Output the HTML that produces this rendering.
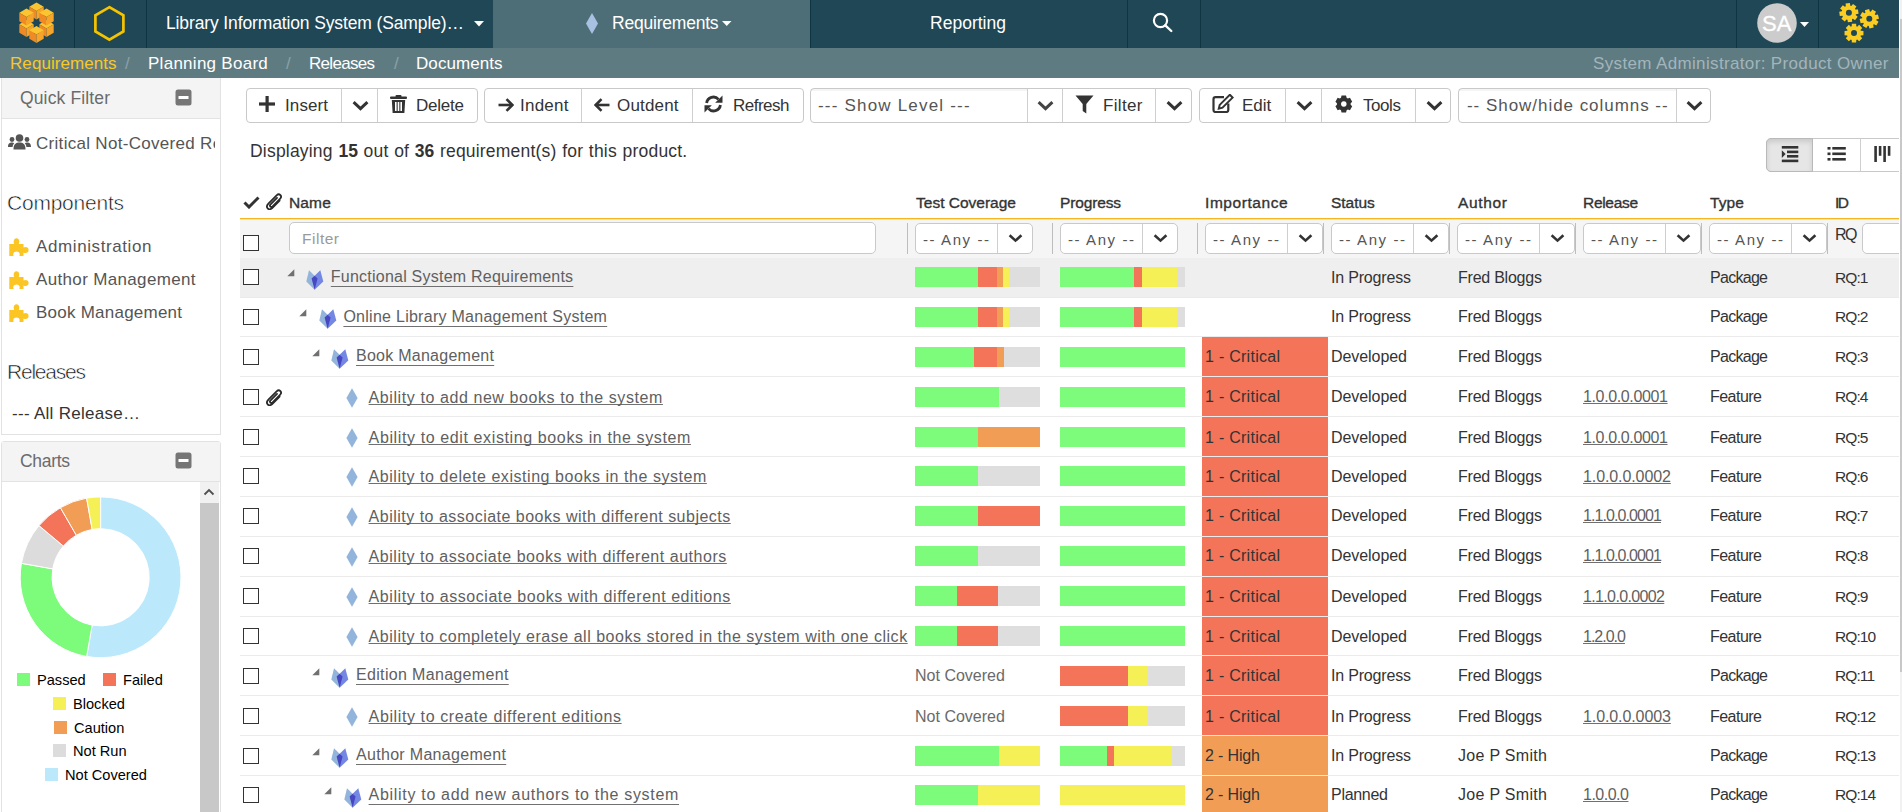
<!DOCTYPE html>
<html><head><meta charset="utf-8"><title>Requirements</title>
<style>
html,body{margin:0;padding:0;background:#fff;width:1902px;height:812px;overflow:hidden;}
body{position:relative;font-family:"Liberation Sans",sans-serif;}
.r{position:absolute;display:block;}
.t{position:absolute;white-space:nowrap;font-family:"Liberation Sans",sans-serif;}
.u{text-decoration:underline;text-underline-offset:0.6px;text-decoration-skip-ink:none;text-decoration-thickness:1px;text-decoration-color:#707070;}
.up{text-underline-offset:3.6px;}
</style></head><body>
<div class="r" style="left:0px;top:0px;width:1899px;height:48px;background:#1f4756;"></div>
<svg class="r" style="left:19px;top:2px;" width="36" height="42" viewBox="0 0 36 42"><polygon points="7.5,18.1 14.7,22.3 7.5,26.5 0.3,22.3" fill="#fbc531"/><polygon points="0.3,22.3 7.5,26.5 7.5,34.9 0.3,30.7" fill="#f08a24"/><polygon points="14.7,22.3 7.5,26.5 7.5,34.9 14.7,30.7" fill="#f6a52a"/><polygon points="27.5,18.1 34.7,22.3 27.5,26.5 20.3,22.3" fill="#fbc531"/><polygon points="20.3,22.3 27.5,26.5 27.5,34.9 20.3,30.7" fill="#f08a24"/><polygon points="34.7,22.3 27.5,26.5 27.5,34.9 34.7,30.7" fill="#f6a52a"/><polygon points="17.5,0.6 24.7,4.8 17.5,9.0 10.3,4.8" fill="#fbc531"/><polygon points="10.3,4.8 17.5,9.0 17.5,17.4 10.3,13.2" fill="#f08a24"/><polygon points="24.7,4.8 17.5,9.0 17.5,17.4 24.7,13.2" fill="#f6a52a"/><polygon points="7.5,6.6 14.7,10.8 7.5,15.0 0.3,10.8" fill="#fbc531"/><polygon points="0.3,10.8 7.5,15.0 7.5,23.4 0.3,19.2" fill="#f08a24"/><polygon points="14.7,10.8 7.5,15.0 7.5,23.4 14.7,19.2" fill="#f6a52a"/><polygon points="27.5,6.6 34.7,10.8 27.5,15.0 20.3,10.8" fill="#fbc531"/><polygon points="20.3,10.8 27.5,15.0 27.5,23.4 20.3,19.2" fill="#f08a24"/><polygon points="34.7,10.8 27.5,15.0 27.5,23.4 34.7,19.2" fill="#f6a52a"/><polygon points="17.5,24.1 24.7,28.3 17.5,32.5 10.3,28.3" fill="#fbc531"/><polygon points="10.3,28.3 17.5,32.5 17.5,40.9 10.3,36.7" fill="#f08a24"/><polygon points="24.7,28.3 17.5,32.5 17.5,40.9 24.7,36.7" fill="#f6a52a"/></svg>
<div class="r" style="left:74px;top:0px;width:1px;height:48px;background:#0f3542;"></div>
<svg class="r" style="left:90px;top:4px;" width="40" height="40" viewBox="0 0 40 40"><polygon points="19.4,3.2 33.4,11.3 33.4,27.5 19.4,35.6 5.4,27.5 5.4,11.3" fill="none" stroke="#f5c400" stroke-width="2.7"/></svg>
<div class="r" style="left:146px;top:0px;width:1px;height:48px;background:#0f3542;"></div>
<div class="t" style="left:166px;top:15px;font-size:17.5px;line-height:17.5px;color:#ffffff;letter-spacing:-0.128px;">Library Information System (Sample)…</div>
<svg class="r" style="left:474px;top:21px;" width="10" height="6" viewBox="0 0 10 6"><polygon points="0,0 10,0 5,5.5" fill="#fff"/></svg>
<div class="r" style="left:493px;top:0px;width:317px;height:48px;background:#4e6e77;"></div>
<svg class="r" style="left:585px;top:13px;" width="14" height="21" viewBox="0 0 14 21"><polygon points="7,0 13,10.5 7,21 1,10.5" fill="#a8c1e3"/></svg>
<div class="t" style="left:612px;top:15px;font-size:17.5px;line-height:17.5px;color:#ffffff;letter-spacing:-0.214px;">Requirements</div>
<svg class="r" style="left:722px;top:21px;" width="10" height="6" viewBox="0 0 10 6"><polygon points="0,0 9.5,0 4.75,5" fill="#fff"/></svg>
<div class="r" style="left:810px;top:0px;width:1px;height:48px;background:#0f3542;"></div>
<div class="t" style="left:930px;top:15px;font-size:17.5px;line-height:17.5px;color:#ffffff;letter-spacing:0.014px;">Reporting</div>
<div class="r" style="left:1127px;top:0px;width:1px;height:48px;background:#0f3542;"></div>
<svg class="r" style="left:1150px;top:10px;" width="26" height="26" viewBox="0 0 26 26"><circle cx="10.5" cy="10.5" r="6.6" fill="none" stroke="#fff" stroke-width="2.2"/><line x1="15.3" y1="15.3" x2="21.3" y2="21" stroke="#fff" stroke-width="2.4" stroke-linecap="round"/></svg>
<div class="r" style="left:1200px;top:0px;width:1px;height:48px;background:#0f3542;"></div>
<div class="r" style="left:1736px;top:0px;width:1px;height:48px;background:#0f3542;"></div>
<div class="r" style="left:1818px;top:0px;width:1px;height:48px;background:#0f3542;"></div>
<svg class="r" style="left:1757px;top:3px;" width="40" height="40" viewBox="0 0 40 40"><circle cx="20" cy="20" r="19.8" fill="#cccccc"/></svg>
<div class="t" style="left:1762px;top:13px;font-size:22px;line-height:22px;color:#ffffff;letter-spacing:0.156px;-webkit-text-stroke:0.3px #fff;">SA</div>
<svg class="r" style="left:1800px;top:22px;" width="10" height="6" viewBox="0 0 10 6"><polygon points="0,0 9,0 4.5,5" fill="#fff"/></svg>
<svg class="r" style="left:1839px;top:3px;" width="42" height="42" viewBox="0 0 42 42"><path d="M6.80,3.20 L6.58,0.58 L10.91,0.05 L11.34,2.64 L12.30,2.91 L14.00,0.91 L17.44,3.60 L15.90,5.73 L16.40,6.60 L19.02,6.38 L19.55,10.71 L16.96,11.14 L16.69,12.10 L18.69,13.80 L16.00,17.24 L13.87,15.70 L13.00,16.20 L13.22,18.82 L8.89,19.35 L8.46,16.76 L7.50,16.49 L5.80,18.49 L2.36,15.80 L3.90,13.67 L3.40,12.80 L0.78,13.02 L0.25,8.69 L2.84,8.26 L3.11,7.30 L1.11,5.60 L3.80,2.16 L5.93,3.70 Z M9.90,9.70 m-3.00,0 a3.00,3.00 0 1,0 6.00,0 a3.00,3.00 0 1,0 -6.00,0Z" fill="#fbcd22" fill-rule="evenodd"/><path d="M26.43,9.73 L25.90,7.16 L30.13,6.10 L30.86,8.62 L31.86,8.77 L33.30,6.57 L37.04,8.82 L35.77,11.12 L36.37,11.93 L38.94,11.40 L40.00,15.63 L37.48,16.36 L37.33,17.36 L39.53,18.80 L37.28,22.54 L34.98,21.27 L34.17,21.87 L34.70,24.44 L30.47,25.50 L29.74,22.98 L28.74,22.83 L27.30,25.03 L23.56,22.78 L24.83,20.48 L24.23,19.67 L21.66,20.20 L20.60,15.97 L23.12,15.24 L23.27,14.24 L21.07,12.80 L23.32,9.06 L25.62,10.33 Z M30.30,15.80 m-3.00,0 a3.00,3.00 0 1,0 6.00,0 a3.00,3.00 0 1,0 -6.00,0Z" fill="#fbcd22" fill-rule="evenodd"/><path d="M12.72,23.27 L12.82,20.65 L17.18,20.65 L17.28,23.27 L18.21,23.66 L20.14,21.87 L23.23,24.96 L21.44,26.89 L21.83,27.82 L24.45,27.92 L24.45,32.28 L21.83,32.38 L21.44,33.31 L23.23,35.24 L20.14,38.33 L18.21,36.54 L17.28,36.93 L17.18,39.55 L12.82,39.55 L12.72,36.93 L11.79,36.54 L9.86,38.33 L6.77,35.24 L8.56,33.31 L8.17,32.38 L5.55,32.28 L5.55,27.92 L8.17,27.82 L8.56,26.89 L6.77,24.96 L9.86,21.87 L11.79,23.66 Z M15.00,30.10 m-3.00,0 a3.00,3.00 0 1,0 6.00,0 a3.00,3.00 0 1,0 -6.00,0Z" fill="#fbcd22" fill-rule="evenodd"/></svg>
<div class="r" style="left:0px;top:48px;width:1899px;height:30px;background:#5f7b82;"></div>
<div class="t" style="left:10px;top:55px;font-size:17px;line-height:17px;color:#f9c825;letter-spacing:0.072px;">Requirements</div>
<div class="t" style="left:125px;top:55px;font-size:17px;line-height:17px;color:#8aa1a7;">/</div>
<div class="t" style="left:148px;top:55px;font-size:17px;line-height:17px;color:#ffffff;letter-spacing:0.273px;">Planning Board</div>
<div class="t" style="left:286px;top:55px;font-size:17px;line-height:17px;color:#8aa1a7;">/</div>
<div class="t" style="left:309px;top:55px;font-size:17px;line-height:17px;color:#ffffff;letter-spacing:-0.696px;">Releases</div>
<div class="t" style="left:394px;top:55px;font-size:17px;line-height:17px;color:#8aa1a7;">/</div>
<div class="t" style="left:416px;top:55px;font-size:17px;line-height:17px;color:#ffffff;letter-spacing:0.079px;">Documents</div>
<div class="t" style="left:1593px;top:55px;font-size:17px;line-height:17px;color:#a3b5ba;letter-spacing:0.354px;">System Administrator: Product Owner</div>
<div class="r" style="left:1px;top:78px;width:218px;height:356px;border:1px solid #e2e2e2;border-top:none;background:#fff"></div>
<div class="r" style="left:2px;top:78px;width:218px;height:40px;background:#f4f4f4;border-bottom:1px solid #e3e3e3;"></div>
<div class="t" style="left:20px;top:90px;font-size:17.5px;line-height:17.5px;color:#6b6b6b;letter-spacing:0.138px;">Quick Filter</div>
<svg class="r" style="left:175px;top:89px;" width="17" height="17" viewBox="0 0 17 17"><rect x="0.5" y="0.5" width="16" height="16" rx="2.5" fill="#767676"/><rect x="3.5" y="7" width="10" height="3" fill="#fff"/></svg>
<svg class="r" style="left:8px;top:134px;" width="23" height="16" viewBox="0 0 23 16"><circle cx="11.5" cy="4" r="3.8" fill="#555"/><path d="M5.5,15.5 C5.5,10 8,8.6 11.5,8.6 C15,8.6 17.5,10 17.5,15.5 Z" fill="#555"/><circle cx="4" cy="5.5" r="2.4" fill="#555"/><circle cx="19" cy="5.5" r="2.4" fill="#555"/><path d="M0,13 C0,9.5 1.6,8.6 4,8.6 C5,8.6 5.6,8.8 6.2,9.2 C5,10.5 4.6,12 4.6,13Z" fill="#555"/><path d="M23,13 C23,9.5 21.4,8.6 19,8.6 C18,8.6 17.4,8.8 16.8,9.2 C18,10.5 18.4,12 18.4,13Z" fill="#555"/></svg>
<div class="r" style="left:0;top:0;width:215px;height:812px;overflow:hidden;">
<div class="t" style="left:36px;top:135px;font-size:17px;line-height:17px;color:#555555;letter-spacing:0.300px;">Critical Not-Covered Requirements</div>
</div>
<div class="t" style="left:7px;top:192px;font-size:21px;line-height:21px;color:#111111;letter-spacing:-0.226px;-webkit-text-stroke:0.55px #fff;">Components</div>
<svg class="r" style="left:9px;top:238px;" width="20" height="18" viewBox="0 0 20 18"><path d="M0.3,6 H5.2 C4.4,4.8 4.2,0.3 7.5,0.3 C10.8,0.3 10.6,4.8 9.8,6 H14.5 V9.6 C15.8,8.6 19.6,8.4 19.6,12 C19.6,15.6 15.8,15.4 14.5,14.4 V18 H10.3 C11.2,16.6 10.8,13.6 7.5,13.6 C4.2,13.6 3.8,16.6 4.7,18 H0.3 Z" fill="#fbc624"/></svg>
<div class="t" style="left:36px;top:238px;font-size:17px;line-height:17px;color:#555555;letter-spacing:0.600px;">Administration</div>
<svg class="r" style="left:9px;top:271px;" width="20" height="18" viewBox="0 0 20 18"><path d="M0.3,6 H5.2 C4.4,4.8 4.2,0.3 7.5,0.3 C10.8,0.3 10.6,4.8 9.8,6 H14.5 V9.6 C15.8,8.6 19.6,8.4 19.6,12 C19.6,15.6 15.8,15.4 14.5,14.4 V18 H10.3 C11.2,16.6 10.8,13.6 7.5,13.6 C4.2,13.6 3.8,16.6 4.7,18 H0.3 Z" fill="#fbc624"/></svg>
<div class="t" style="left:36px;top:271px;font-size:17px;line-height:17px;color:#555555;letter-spacing:0.344px;">Author Management</div>
<svg class="r" style="left:9px;top:304px;" width="20" height="18" viewBox="0 0 20 18"><path d="M0.3,6 H5.2 C4.4,4.8 4.2,0.3 7.5,0.3 C10.8,0.3 10.6,4.8 9.8,6 H14.5 V9.6 C15.8,8.6 19.6,8.4 19.6,12 C19.6,15.6 15.8,15.4 14.5,14.4 V18 H10.3 C11.2,16.6 10.8,13.6 7.5,13.6 C4.2,13.6 3.8,16.6 4.7,18 H0.3 Z" fill="#fbc624"/></svg>
<div class="t" style="left:36px;top:304px;font-size:17px;line-height:17px;color:#555555;letter-spacing:0.238px;">Book Management</div>
<div class="t" style="left:7px;top:361px;font-size:21px;line-height:21px;color:#111111;letter-spacing:-1.219px;-webkit-text-stroke:0.55px #fff;">Releases</div>
<div class="t" style="left:12px;top:405px;font-size:17px;line-height:17px;color:#333333;letter-spacing:0.283px;">--- All Release…</div>
<div class="r" style="left:1px;top:441px;width:218px;height:380px;border:1px solid #e2e2e2;border-radius:3px 3px 0 0;background:#fff"></div>
<div class="r" style="left:2px;top:442px;width:218px;height:39px;background:#f4f4f4;border-bottom:1px solid #e3e3e3;"></div>
<div class="t" style="left:20px;top:453px;font-size:17.5px;line-height:17.5px;color:#6b6b6b;letter-spacing:-0.309px;">Charts</div>
<svg class="r" style="left:175px;top:452px;" width="17" height="17" viewBox="0 0 17 17"><rect x="0.5" y="0.5" width="16" height="16" rx="2.5" fill="#767676"/><rect x="3.5" y="7" width="10" height="3" fill="#fff"/></svg>
<div class="r" style="left:200px;top:482px;width:19px;height:330px;background:#f1f1f1;"></div>
<div class="r" style="left:200px;top:503px;width:19px;height:309px;background:#c8c8c8;"></div>
<svg class="r" style="left:203px;top:487px;" width="12" height="10" viewBox="0 0 12 10"><polyline points="1.5,7.5 6,3 10.5,7.5" fill="none" stroke="#505050" stroke-width="1.8"/></svg>
<svg class="r" style="left:0px;top:482px;" width="200" height="200" viewBox="0 482 200 200"><path d="M100.60,496.90 A80.40,80.40 0 1,1 86.64,656.48 L92.16,625.16 A48.60,48.60 0 1,0 100.60,528.70 Z" fill="#bbe9fb" stroke="#fff" stroke-width="1"/><path d="M86.64,656.48 A80.40,80.40 0 0,1 21.42,563.34 L52.74,568.86 A48.60,48.60 0 0,0 92.16,625.16 Z" fill="#7dfb7a" stroke="#fff" stroke-width="1"/><path d="M21.42,563.34 A80.40,80.40 0 0,1 39.01,525.62 L63.37,546.06 A48.60,48.60 0 0,0 52.74,568.86 Z" fill="#dcdcdc" stroke="#fff" stroke-width="1"/><path d="M39.01,525.62 A80.40,80.40 0 0,1 60.40,507.67 L76.30,535.21 A48.60,48.60 0 0,0 63.37,546.06 Z" fill="#f37458" stroke="#fff" stroke-width="1"/><path d="M60.40,507.67 A80.40,80.40 0 0,1 86.64,498.12 L92.16,529.44 A48.60,48.60 0 0,0 76.30,535.21 Z" fill="#f29d56" stroke="#fff" stroke-width="1"/><path d="M86.64,498.12 A80.40,80.40 0 0,1 100.60,496.90 L100.60,528.70 A48.60,48.60 0 0,0 92.16,529.44 Z" fill="#f5f055" stroke="#fff" stroke-width="1"/></svg>
<div class="r" style="left:17px;top:673px;width:13px;height:13px;background:#7dfb7a;"></div>
<div class="t" style="left:37px;top:673px;font-size:14.6px;line-height:14.6px;color:#000000;">Passed</div>
<div class="r" style="left:103px;top:673px;width:13px;height:13px;background:#f37458;"></div>
<div class="t" style="left:123px;top:673px;font-size:14.6px;line-height:14.6px;color:#000000;">Failed</div>
<div class="r" style="left:53px;top:697px;width:13px;height:13px;background:#f5f055;"></div>
<div class="t" style="left:73px;top:697px;font-size:14.6px;line-height:14.6px;color:#000000;">Blocked</div>
<div class="r" style="left:54px;top:721px;width:13px;height:13px;background:#f29d56;"></div>
<div class="t" style="left:74px;top:721px;font-size:14.6px;line-height:14.6px;color:#000000;">Caution</div>
<div class="r" style="left:53px;top:744px;width:13px;height:13px;background:#dcdcdc;"></div>
<div class="t" style="left:73px;top:744px;font-size:14.6px;line-height:14.6px;color:#000000;">Not Run</div>
<div class="r" style="left:45px;top:768px;width:13px;height:13px;background:#bbe9fb;"></div>
<div class="t" style="left:65px;top:768px;font-size:14.6px;line-height:14.6px;color:#000000;">Not Covered</div>
<div class="r" style="left:246px;top:88px;width:232px;height:35px;border:1px solid #c9c9c9;border-radius:4px;background:#fff;box-sizing:border-box;"></div>
<div class="r" style="left:341px;top:89px;width:1px;height:33px;background:#cfcfcf;"></div>
<div class="r" style="left:377px;top:89px;width:1px;height:33px;background:#cfcfcf;"></div>
<svg class="r" style="left:259px;top:96px;" width="16" height="16" viewBox="0 0 16 16"><rect x="6.5" y="0" width="3.2" height="16" fill="#333"/><rect x="0" y="6.4" width="16" height="3.2" fill="#333"/></svg>
<div class="t" style="left:285px;top:97px;font-size:17px;line-height:17px;color:#333;letter-spacing:0.100px;">Insert</div>
<svg class="r" style="left:352px;top:100px;" width="17" height="12" viewBox="0 0 17 12"><polyline points="1.6,2.2 8.5,8.6 15.4,2.2" fill="none" stroke="#333" stroke-width="3.0"/></svg>
<svg class="r" style="left:390px;top:95px;" width="17" height="18" viewBox="0 0 17 18"><rect x="0" y="1.6" width="17" height="2.4" rx="1" fill="#333"/><rect x="5.5" y="0" width="6" height="2.4" rx="1" fill="#333"/><path d="M1.8,5 H15.2 L14.4,18 H2.6 Z" fill="#333"/><rect x="5" y="7" width="1.6" height="9" fill="#fff"/><rect x="7.7" y="7" width="1.6" height="9" fill="#fff"/><rect x="10.4" y="7" width="1.6" height="9" fill="#fff"/></svg>
<div class="t" style="left:416px;top:97px;font-size:17px;line-height:17px;color:#333;letter-spacing:-0.228px;">Delete</div>
<div class="r" style="left:484px;top:88px;width:320px;height:35px;border:1px solid #c9c9c9;border-radius:4px;background:#fff;box-sizing:border-box;"></div>
<div class="r" style="left:581px;top:89px;width:1px;height:33px;background:#cfcfcf;"></div>
<div class="r" style="left:692px;top:89px;width:1px;height:33px;background:#cfcfcf;"></div>
<svg class="r" style="left:498px;top:98px;" width="16" height="14" viewBox="0 0 16 14"><polyline points="8.5,1.2 14.3,7 8.5,12.8" fill="none" stroke="#333" stroke-width="2.6"/><line x1="0.5" y1="7" x2="13.5" y2="7" stroke="#333" stroke-width="2.6"/></svg>
<div class="t" style="left:520px;top:97px;font-size:17px;line-height:17px;color:#333;letter-spacing:0.230px;">Indent</div>
<svg class="r" style="left:594px;top:98px;" width="16" height="14" viewBox="0 0 16 14"><polyline points="7.5,1.2 1.7,7 7.5,12.8" fill="none" stroke="#333" stroke-width="2.6"/><line x1="2.5" y1="7" x2="15.5" y2="7" stroke="#333" stroke-width="2.6"/></svg>
<div class="t" style="left:617px;top:97px;font-size:17px;line-height:17px;color:#333;letter-spacing:0.172px;">Outdent</div>
<svg class="r" style="left:704px;top:95px;" width="19" height="18" viewBox="0 0 19 18"><path d="M2.6,8 A6.8,6.8 0 0 1 14.5,4.4" fill="none" stroke="#333" stroke-width="2.8"/><polygon points="18.5,0.5 18.5,7.8 11.2,7.8" fill="#333"/><path d="M16.4,10 A6.8,6.8 0 0 1 4.5,13.6" fill="none" stroke="#333" stroke-width="2.8"/><polygon points="0.5,17.5 0.5,10.2 7.8,10.2" fill="#333"/></svg>
<div class="t" style="left:733px;top:97px;font-size:17px;line-height:17px;color:#333;letter-spacing:-0.503px;">Refresh</div>
<div class="r" style="left:810px;top:88px;width:382px;height:35px;border:1px solid #c9c9c9;border-radius:4px;background:#fff;box-sizing:border-box;"></div>
<div class="r" style="left:1027px;top:89px;width:1px;height:33px;background:#cfcfcf;"></div>
<div class="r" style="left:1062px;top:89px;width:1px;height:33px;background:#cfcfcf;"></div>
<div class="r" style="left:1155px;top:89px;width:1px;height:33px;background:#cfcfcf;"></div>
<div class="r" style="left:811px;top:89px;width:216px;height:2px;background:rgba(0,0,0,0.04);"></div>
<div class="t" style="left:818px;top:97px;font-size:17px;line-height:17px;color:#555;letter-spacing:1.196px;">--- Show Level ---</div>
<svg class="r" style="left:1037px;top:100px;" width="17" height="12" viewBox="0 0 17 12"><polyline points="1.6,2.2 8.5,8.6 15.4,2.2" fill="none" stroke="#444" stroke-width="3.0"/></svg>
<svg class="r" style="left:1075px;top:95px;" width="19" height="19" viewBox="0 0 19 19"><path d="M0.5,0.5 H18.5 L11.3,9 V18.5 L7.7,16 V9 Z" fill="#333"/></svg>
<div class="t" style="left:1103px;top:97px;font-size:17px;line-height:17px;color:#333;letter-spacing:0.324px;">Filter</div>
<svg class="r" style="left:1166px;top:100px;" width="17" height="12" viewBox="0 0 17 12"><polyline points="1.6,2.2 8.5,8.6 15.4,2.2" fill="none" stroke="#333" stroke-width="3.0"/></svg>
<div class="r" style="left:1199px;top:88px;width:252px;height:35px;border:1px solid #c9c9c9;border-radius:4px;background:#fff;box-sizing:border-box;"></div>
<div class="r" style="left:1285px;top:89px;width:1px;height:33px;background:#cfcfcf;"></div>
<div class="r" style="left:1321px;top:89px;width:1px;height:33px;background:#cfcfcf;"></div>
<div class="r" style="left:1415px;top:89px;width:1px;height:33px;background:#cfcfcf;"></div>
<svg class="r" style="left:1212px;top:94px;" width="22" height="19" viewBox="0 0 22 19"><path d="M12,3.2 H3.5 Q1.5,3.2 1.5,5.2 V16 Q1.5,18 3.5,18 H14.3 Q16.3,18 16.3,16 V9.5" fill="none" stroke="#333" stroke-width="2.2"/><path d="M17.8,0.8 L20.6,3.6 L10.5,13.7 L6.8,14.6 L7.7,10.9 Z" fill="none" stroke="#333" stroke-width="2"/></svg>
<div class="t" style="left:1242px;top:97px;font-size:17px;line-height:17px;color:#333;letter-spacing:-0.032px;">Edit</div>
<svg class="r" style="left:1296px;top:100px;" width="17" height="12" viewBox="0 0 17 12"><polyline points="1.6,2.2 8.5,8.6 15.4,2.2" fill="none" stroke="#333" stroke-width="3.0"/></svg>
<svg class="r" style="left:1335px;top:95px;" width="18" height="18" viewBox="0 0 18 18"><path d="M5.99,2.70 L6.55,0.60 L11.05,0.60 L11.61,2.70 L12.86,3.42 L14.95,2.85 L17.20,6.75 L15.66,8.28 L15.66,9.72 L17.20,11.25 L14.95,15.15 L12.86,14.58 L11.61,15.30 L11.05,17.40 L6.55,17.40 L5.99,15.30 L4.74,14.58 L2.65,15.15 L0.40,11.25 L1.94,9.72 L1.94,8.28 L0.40,6.75 L2.65,2.85 L4.74,3.42 Z M8.8,6.2 a2.8,2.8 0 1,0 0.01,0Z" fill="#333" fill-rule="evenodd"/></svg>
<div class="t" style="left:1363px;top:97px;font-size:17px;line-height:17px;color:#333;letter-spacing:-0.447px;">Tools</div>
<svg class="r" style="left:1426px;top:100px;" width="17" height="12" viewBox="0 0 17 12"><polyline points="1.6,2.2 8.5,8.6 15.4,2.2" fill="none" stroke="#333" stroke-width="3.0"/></svg>
<div class="r" style="left:1458px;top:88px;width:253px;height:35px;border:1px solid #c9c9c9;border-radius:4px;background:#fff;box-sizing:border-box;"></div>
<div class="r" style="left:1676px;top:89px;width:1px;height:33px;background:#cfcfcf;"></div>
<div class="r" style="left:1459px;top:89px;width:217px;height:2px;background:rgba(0,0,0,0.04);"></div>
<div class="t" style="left:1467px;top:97px;font-size:17px;line-height:17px;color:#555;letter-spacing:0.961px;">-- Show/hide columns --</div>
<svg class="r" style="left:1686px;top:100px;" width="17" height="12" viewBox="0 0 17 12"><polyline points="1.6,2.2 8.5,8.6 15.4,2.2" fill="none" stroke="#333" stroke-width="3.0"/></svg>
<div class="r" style="left:1766px;top:138px;width:140px;height:34px;border:1px solid #c9c9c9;border-radius:5px;box-sizing:border-box;background:#fff"></div>
<div class="r" style="left:1766px;top:138px;width:47px;height:34px;border:1px solid #b9b9b9;border-radius:5px 0 0 5px;box-sizing:border-box;background:#e6e6e6;box-shadow:inset 0 3px 5px rgba(0,0,0,0.12)"></div>
<div class="r" style="left:1860px;top:139px;width:1px;height:32px;background:#cfcfcf;"></div>
<svg class="r" style="left:1781px;top:146px;" width="18" height="17" viewBox="0 0 18 17"><rect x="0.8" y="0" width="16.5" height="2.6" fill="#333"/><rect x="6" y="4.6" width="11.3" height="2.6" fill="#333"/><rect x="6" y="9" width="11.3" height="2.6" fill="#333"/><rect x="0.8" y="13.6" width="16.5" height="2.6" fill="#333"/><polygon points="0.8,4.2 4.6,8.1 0.8,12" fill="#333"/></svg>
<svg class="r" style="left:1827px;top:147px;" width="20" height="14" viewBox="0 0 20 14"><rect x="0.5" y="0" width="3" height="2.6" fill="#333"/><rect x="5.3" y="0" width="13.5" height="2.6" fill="#333"/><rect x="0.5" y="5.5" width="3" height="2.6" fill="#333"/><rect x="5.3" y="5.5" width="13.5" height="2.6" fill="#333"/><rect x="0.5" y="11" width="3" height="2.6" fill="#333"/><rect x="5.3" y="11" width="13.5" height="2.6" fill="#333"/></svg>
<svg class="r" style="left:1874px;top:146px;" width="18" height="17" viewBox="0 0 18 17"><rect x="0.3" y="0" width="2.6" height="16" fill="#333"/><rect x="4.8" y="0" width="2.6" height="9.8" fill="#333"/><rect x="9.3" y="0" width="2.6" height="16" fill="#333"/><rect x="13.8" y="0" width="2.6" height="9.8" fill="#333"/></svg>
<div class="t" style="left:250px;top:143px;font-size:17.5px;line-height:17px;color:#333;letter-spacing:0.2px;word-spacing:0.6px">Displaying <b style="font-weight:bold;letter-spacing:0px">15</b> out of <b style="font-weight:bold;letter-spacing:0px">36</b> requirement(s) for this product.</div>
<svg class="r" style="left:243px;top:196px;" width="17" height="13" viewBox="0 0 17 13"><polyline points="1.5,6.5 6,11 15.5,1.5" fill="none" stroke="#333" stroke-width="3"/></svg>
<svg class="r" style="left:266px;top:193px;" width="16" height="17" viewBox="0 0 16 17"><path d="M13.6,7.6 L6.2,15 Q3.6,17.4 1.7,15.3 Q-0.2,13.2 2.4,10.6 L10.6,2.4 Q12.7,0.4 14.4,2.1 Q16,3.9 14,5.9 L6.6,13.3 Q5.3,14.5 4.3,13.5 Q3.3,12.5 4.6,11.3 L11,4.9" fill="none" stroke="#2a2a2a" stroke-width="1.8" stroke-linecap="round"/></svg>
<div class="t" style="left:289px;top:195px;font-size:15.5px;line-height:15.5px;color:#333;letter-spacing:0.152px;-webkit-text-stroke:0.35px #333;">Name</div>
<div class="t" style="left:916px;top:195px;font-size:15.5px;line-height:15.5px;color:#333;letter-spacing:0.003px;-webkit-text-stroke:0.35px #333;">Test Coverage</div>
<div class="t" style="left:1060px;top:195px;font-size:15.5px;line-height:15.5px;color:#333;letter-spacing:-0.147px;-webkit-text-stroke:0.35px #333;">Progress</div>
<div class="t" style="left:1205px;top:195px;font-size:15.5px;line-height:15.5px;color:#333;letter-spacing:0.571px;-webkit-text-stroke:0.35px #333;">Importance</div>
<div class="t" style="left:1331px;top:195px;font-size:15.5px;line-height:15.5px;color:#333;letter-spacing:-0.034px;-webkit-text-stroke:0.35px #333;">Status</div>
<div class="t" style="left:1458px;top:195px;font-size:15.5px;line-height:15.5px;color:#333;letter-spacing:0.662px;-webkit-text-stroke:0.35px #333;">Author</div>
<div class="t" style="left:1583px;top:195px;font-size:15.5px;line-height:15.5px;color:#333;letter-spacing:-0.312px;-webkit-text-stroke:0.35px #333;">Release</div>
<div class="t" style="left:1710px;top:195px;font-size:15.5px;line-height:15.5px;color:#333;letter-spacing:0.130px;-webkit-text-stroke:0.35px #333;">Type</div>
<div class="t" style="left:1835px;top:195px;font-size:15.5px;line-height:15.5px;color:#333;letter-spacing:-1.500px;-webkit-text-stroke:0.35px #333;">ID</div>
<div class="r" style="left:240px;top:218px;width:1659px;height:1px;background:#f7b51f;"></div>
<div class="r" style="left:240px;top:219px;width:1659px;height:1px;background:#fae3a8;"></div>
<div class="r" style="left:240px;top:220px;width:1659px;height:38px;background:#f5f5f5;"></div>
<div class="r" style="left:243px;top:235px;width:16px;height:16px;border:1.5px solid #333;box-sizing:border-box;background:#fff"></div>
<div class="r" style="left:289px;top:222px;width:587px;height:32px;border:1px solid #c9c9c9;border-radius:5px;box-sizing:border-box;background:#fff"></div>
<div class="t" style="left:302px;top:231px;font-size:15.5px;line-height:15.5px;color:#9a9a9a;letter-spacing:0.512px;">Filter</div>
<div class="r" style="left:907px;top:223px;width:1px;height:31px;background:#bdbdbd;"></div>
<div class="r" style="left:1052px;top:223px;width:1px;height:31px;background:#bdbdbd;"></div>
<div class="r" style="left:1197px;top:223px;width:1px;height:31px;background:#bdbdbd;"></div>
<div class="r" style="left:1323px;top:223px;width:1px;height:31px;background:#bdbdbd;"></div>
<div class="r" style="left:1449px;top:223px;width:1px;height:31px;background:#bdbdbd;"></div>
<div class="r" style="left:1575px;top:223px;width:1px;height:31px;background:#bdbdbd;"></div>
<div class="r" style="left:1701px;top:223px;width:1px;height:31px;background:#bdbdbd;"></div>
<div class="r" style="left:1827px;top:223px;width:1px;height:31px;background:#bdbdbd;"></div>
<div class="r" style="left:915px;top:223px;width:118px;height:31px;border:1px solid #c9c9c9;border-radius:5px;box-sizing:border-box;background:#fff"></div>
<div class="r" style="left:997px;top:224px;width:1px;height:29px;background:#cfcfcf;"></div>
<div class="t" style="left:923px;top:232px;font-size:15px;line-height:15px;color:#555;letter-spacing:1.580px;">-- Any --</div>
<svg class="r" style="left:1008px;top:233px;" width="15" height="11" viewBox="0 0 15 11"><polyline points="1.6,2.2 7.5,7.6 13.4,2.2" fill="none" stroke="#333" stroke-width="2.6"/></svg>
<div class="r" style="left:1060px;top:223px;width:118px;height:31px;border:1px solid #c9c9c9;border-radius:5px;box-sizing:border-box;background:#fff"></div>
<div class="r" style="left:1142px;top:224px;width:1px;height:29px;background:#cfcfcf;"></div>
<div class="t" style="left:1068px;top:232px;font-size:15px;line-height:15px;color:#555;letter-spacing:1.580px;">-- Any --</div>
<svg class="r" style="left:1153px;top:233px;" width="15" height="11" viewBox="0 0 15 11"><polyline points="1.6,2.2 7.5,7.6 13.4,2.2" fill="none" stroke="#333" stroke-width="2.6"/></svg>
<div class="r" style="left:1205px;top:223px;width:118px;height:31px;border:1px solid #c9c9c9;border-radius:5px;box-sizing:border-box;background:#fff"></div>
<div class="r" style="left:1287px;top:224px;width:1px;height:29px;background:#cfcfcf;"></div>
<div class="t" style="left:1213px;top:232px;font-size:15px;line-height:15px;color:#555;letter-spacing:1.580px;">-- Any --</div>
<svg class="r" style="left:1298px;top:233px;" width="15" height="11" viewBox="0 0 15 11"><polyline points="1.6,2.2 7.5,7.6 13.4,2.2" fill="none" stroke="#333" stroke-width="2.6"/></svg>
<div class="r" style="left:1331px;top:223px;width:118px;height:31px;border:1px solid #c9c9c9;border-radius:5px;box-sizing:border-box;background:#fff"></div>
<div class="r" style="left:1413px;top:224px;width:1px;height:29px;background:#cfcfcf;"></div>
<div class="t" style="left:1339px;top:232px;font-size:15px;line-height:15px;color:#555;letter-spacing:1.580px;">-- Any --</div>
<svg class="r" style="left:1424px;top:233px;" width="15" height="11" viewBox="0 0 15 11"><polyline points="1.6,2.2 7.5,7.6 13.4,2.2" fill="none" stroke="#333" stroke-width="2.6"/></svg>
<div class="r" style="left:1457px;top:223px;width:118px;height:31px;border:1px solid #c9c9c9;border-radius:5px;box-sizing:border-box;background:#fff"></div>
<div class="r" style="left:1539px;top:224px;width:1px;height:29px;background:#cfcfcf;"></div>
<div class="t" style="left:1465px;top:232px;font-size:15px;line-height:15px;color:#555;letter-spacing:1.580px;">-- Any --</div>
<svg class="r" style="left:1550px;top:233px;" width="15" height="11" viewBox="0 0 15 11"><polyline points="1.6,2.2 7.5,7.6 13.4,2.2" fill="none" stroke="#333" stroke-width="2.6"/></svg>
<div class="r" style="left:1583px;top:223px;width:118px;height:31px;border:1px solid #c9c9c9;border-radius:5px;box-sizing:border-box;background:#fff"></div>
<div class="r" style="left:1665px;top:224px;width:1px;height:29px;background:#cfcfcf;"></div>
<div class="t" style="left:1591px;top:232px;font-size:15px;line-height:15px;color:#555;letter-spacing:1.580px;">-- Any --</div>
<svg class="r" style="left:1676px;top:233px;" width="15" height="11" viewBox="0 0 15 11"><polyline points="1.6,2.2 7.5,7.6 13.4,2.2" fill="none" stroke="#333" stroke-width="2.6"/></svg>
<div class="r" style="left:1709px;top:223px;width:118px;height:31px;border:1px solid #c9c9c9;border-radius:5px;box-sizing:border-box;background:#fff"></div>
<div class="r" style="left:1791px;top:224px;width:1px;height:29px;background:#cfcfcf;"></div>
<div class="t" style="left:1717px;top:232px;font-size:15px;line-height:15px;color:#555;letter-spacing:1.580px;">-- Any --</div>
<svg class="r" style="left:1802px;top:233px;" width="15" height="11" viewBox="0 0 15 11"><polyline points="1.6,2.2 7.5,7.6 13.4,2.2" fill="none" stroke="#333" stroke-width="2.6"/></svg>
<div class="t" style="left:1835px;top:227px;font-size:16px;line-height:16px;color:#333;letter-spacing:-1.500px;">RQ</div>
<div class="r" style="left:1862px;top:223px;width:60px;height:31px;border:1px solid #c9c9c9;border-radius:5px;box-sizing:border-box;background:#fff"></div>
<div class="r" style="left:240px;top:258px;width:1659px;height:39px;background:#efefef;"></div>
<div class="r" style="left:240px;top:297px;width:1659px;height:1px;background:#ebebeb;"></div>
<div class="r" style="left:243px;top:269px;width:16px;height:16px;border:1.5px solid #333;box-sizing:border-box;background:#fff"></div>
<svg class="r" style="left:287px;top:269px;" width="8" height="8" viewBox="0 0 8 8"><polygon points="7.3,0.3 7.3,7.3 0.3,7.3" fill="#707070"/></svg>
<svg class="r" style="left:306px;top:270px;" width="18" height="20" viewBox="0 0 18 20"><polygon points="0.3,11.5 3,0.3 8.6,5.8 8.6,19.8" fill="#93b4db"/><polygon points="8.6,5.8 14.3,0.3 17.3,11.5 8.6,19.8" fill="#7487e3"/><polygon points="5.6,8.6 8.6,5.8 11.6,8.6 8.6,19.8" fill="#4747c2"/></svg>
<div class="t u up" style="left:330.8px;top:269px;font-size:16px;line-height:16px;color:#606060;letter-spacing:0.230px;">Functional System Requirements</div>
<div class="r" style="left:915px;top:267px;width:63px;height:20px;background:#7dfb7a;"></div>
<div class="r" style="left:978px;top:267px;width:19px;height:20px;background:#f37458;"></div>
<div class="r" style="left:997px;top:267px;width:6px;height:20px;background:#f29d56;"></div>
<div class="r" style="left:1003px;top:267px;width:6px;height:20px;background:#f5f055;"></div>
<div class="r" style="left:1009px;top:267px;width:31px;height:20px;background:#dedede;"></div>
<div class="r" style="left:1060px;top:267px;width:74px;height:20px;background:#7dfb7a;"></div>
<div class="r" style="left:1134px;top:267px;width:8px;height:20px;background:#f37458;"></div>
<div class="r" style="left:1142px;top:267px;width:35px;height:20px;background:#f5f055;"></div>
<div class="r" style="left:1177px;top:267px;width:8px;height:20px;background:#dedede;"></div>
<div class="t" style="left:1331px;top:270px;font-size:16px;line-height:16px;color:#333;letter-spacing:-0.186px;">In Progress</div>
<div class="t" style="left:1458px;top:270px;font-size:16px;line-height:16px;color:#333;letter-spacing:-0.233px;">Fred Bloggs</div>
<div class="t" style="left:1710px;top:270px;font-size:16px;line-height:16px;color:#333;letter-spacing:-0.716px;">Package</div>
<div class="t" style="left:1835px;top:270px;font-size:15.5px;line-height:15.5px;color:#333;letter-spacing:-0.900px;">RQ:1</div>
<div class="r" style="left:240px;top:336px;width:1659px;height:1px;background:#ebebeb;"></div>
<div class="r" style="left:243px;top:309px;width:16px;height:16px;border:1.5px solid #333;box-sizing:border-box;background:#fff"></div>
<svg class="r" style="left:299px;top:309px;" width="8" height="8" viewBox="0 0 8 8"><polygon points="7.3,0.3 7.3,7.3 0.3,7.3" fill="#707070"/></svg>
<svg class="r" style="left:319px;top:309px;" width="18" height="20" viewBox="0 0 18 20"><polygon points="0.3,11.5 3,0.3 8.6,5.8 8.6,19.8" fill="#93b4db"/><polygon points="8.6,5.8 14.3,0.3 17.3,11.5 8.6,19.8" fill="#7487e3"/><polygon points="5.6,8.6 8.6,5.8 11.6,8.6 8.6,19.8" fill="#4747c2"/></svg>
<div class="t u up" style="left:343.4px;top:309px;font-size:16px;line-height:16px;color:#606060;letter-spacing:0.268px;">Online Library Management System</div>
<div class="r" style="left:915px;top:307px;width:63px;height:20px;background:#7dfb7a;"></div>
<div class="r" style="left:978px;top:307px;width:19px;height:20px;background:#f37458;"></div>
<div class="r" style="left:997px;top:307px;width:6px;height:20px;background:#f29d56;"></div>
<div class="r" style="left:1003px;top:307px;width:6px;height:20px;background:#f5f055;"></div>
<div class="r" style="left:1009px;top:307px;width:31px;height:20px;background:#dedede;"></div>
<div class="r" style="left:1060px;top:307px;width:74px;height:20px;background:#7dfb7a;"></div>
<div class="r" style="left:1134px;top:307px;width:8px;height:20px;background:#f37458;"></div>
<div class="r" style="left:1142px;top:307px;width:35px;height:20px;background:#f5f055;"></div>
<div class="r" style="left:1177px;top:307px;width:8px;height:20px;background:#dedede;"></div>
<div class="t" style="left:1331px;top:309px;font-size:16px;line-height:16px;color:#333;letter-spacing:-0.186px;">In Progress</div>
<div class="t" style="left:1458px;top:309px;font-size:16px;line-height:16px;color:#333;letter-spacing:-0.233px;">Fred Bloggs</div>
<div class="t" style="left:1710px;top:309px;font-size:16px;line-height:16px;color:#333;letter-spacing:-0.716px;">Package</div>
<div class="t" style="left:1835px;top:309px;font-size:15.5px;line-height:15.5px;color:#333;letter-spacing:-0.900px;">RQ:2</div>
<div class="r" style="left:240px;top:376px;width:1659px;height:1px;background:#ebebeb;"></div>
<div class="r" style="left:243px;top:349px;width:16px;height:16px;border:1.5px solid #333;box-sizing:border-box;background:#fff"></div>
<svg class="r" style="left:312px;top:349px;" width="8" height="8" viewBox="0 0 8 8"><polygon points="7.3,0.3 7.3,7.3 0.3,7.3" fill="#707070"/></svg>
<svg class="r" style="left:331px;top:349px;" width="18" height="20" viewBox="0 0 18 20"><polygon points="0.3,11.5 3,0.3 8.6,5.8 8.6,19.8" fill="#93b4db"/><polygon points="8.6,5.8 14.3,0.3 17.3,11.5 8.6,19.8" fill="#7487e3"/><polygon points="5.6,8.6 8.6,5.8 11.6,8.6 8.6,19.8" fill="#4747c2"/></svg>
<div class="t u up" style="left:356.0px;top:348px;font-size:16px;line-height:16px;color:#606060;letter-spacing:0.258px;">Book Management</div>
<div class="r" style="left:915px;top:347px;width:59px;height:20px;background:#7dfb7a;"></div>
<div class="r" style="left:974px;top:347px;width:23px;height:20px;background:#f37458;"></div>
<div class="r" style="left:997px;top:347px;width:7px;height:20px;background:#f29d56;"></div>
<div class="r" style="left:1004px;top:347px;width:36px;height:20px;background:#dedede;"></div>
<div class="r" style="left:1060px;top:347px;width:125px;height:20px;background:#7dfb7a;"></div>
<div class="r" style="left:1202px;top:337px;width:126px;height:39px;background:#f37458;"></div>
<div class="t" style="left:1205px;top:349px;font-size:16px;line-height:16px;color:#333;letter-spacing:0.266px;">1 - Critical</div>
<div class="t" style="left:1331px;top:349px;font-size:16px;line-height:16px;color:#333;letter-spacing:-0.070px;">Developed</div>
<div class="t" style="left:1458px;top:349px;font-size:16px;line-height:16px;color:#333;letter-spacing:-0.233px;">Fred Bloggs</div>
<div class="t" style="left:1710px;top:349px;font-size:16px;line-height:16px;color:#333;letter-spacing:-0.716px;">Package</div>
<div class="t" style="left:1835px;top:349px;font-size:15.5px;line-height:15.5px;color:#333;letter-spacing:-0.900px;">RQ:3</div>
<div class="r" style="left:240px;top:416px;width:1659px;height:1px;background:#ebebeb;"></div>
<div class="r" style="left:243px;top:389px;width:16px;height:16px;border:1.5px solid #333;box-sizing:border-box;background:#fff"></div>
<svg class="r" style="left:266px;top:389px;" width="16" height="17" viewBox="0 0 16 17"><path d="M13.6,7.6 L6.2,15 Q3.6,17.4 1.7,15.3 Q-0.2,13.2 2.4,10.6 L10.6,2.4 Q12.7,0.4 14.4,2.1 Q16,3.9 14,5.9 L6.6,13.3 Q5.3,14.5 4.3,13.5 Q3.3,12.5 4.6,11.3 L11,4.9" fill="none" stroke="#2a2a2a" stroke-width="1.8" stroke-linecap="round"/></svg>
<svg class="r" style="left:346px;top:388px;" width="12" height="20" viewBox="0 0 12 20"><polygon points="6,0.3 11.6,10 6,19.7 0.4,10" fill="#93b4db"/></svg>
<div class="t u" style="left:368.6px;top:390px;font-size:16px;line-height:16px;color:#606060;letter-spacing:0.584px;">Ability to add new books to the system</div>
<div class="r" style="left:915px;top:387px;width:84px;height:20px;background:#7dfb7a;"></div>
<div class="r" style="left:999px;top:387px;width:41px;height:20px;background:#dedede;"></div>
<div class="r" style="left:1060px;top:387px;width:125px;height:20px;background:#7dfb7a;"></div>
<div class="r" style="left:1202px;top:377px;width:126px;height:39px;background:#f37458;"></div>
<div class="t" style="left:1205px;top:389px;font-size:16px;line-height:16px;color:#333;letter-spacing:0.266px;">1 - Critical</div>
<div class="t" style="left:1331px;top:389px;font-size:16px;line-height:16px;color:#333;letter-spacing:-0.070px;">Developed</div>
<div class="t" style="left:1458px;top:389px;font-size:16px;line-height:16px;color:#333;letter-spacing:-0.233px;">Fred Bloggs</div>
<div class="t u" style="left:1583px;top:389px;font-size:16px;line-height:16px;color:#606060;letter-spacing:-0.369px;">1.0.0.0.0001</div>
<div class="t" style="left:1710px;top:389px;font-size:16px;line-height:16px;color:#333;letter-spacing:-0.531px;">Feature</div>
<div class="t" style="left:1835px;top:389px;font-size:15.5px;line-height:15.5px;color:#333;letter-spacing:-0.900px;">RQ:4</div>
<div class="r" style="left:240px;top:456px;width:1659px;height:1px;background:#ebebeb;"></div>
<div class="r" style="left:243px;top:429px;width:16px;height:16px;border:1.5px solid #333;box-sizing:border-box;background:#fff"></div>
<svg class="r" style="left:346px;top:428px;" width="12" height="20" viewBox="0 0 12 20"><polygon points="6,0.3 11.6,10 6,19.7 0.4,10" fill="#93b4db"/></svg>
<div class="t u" style="left:368.6px;top:430px;font-size:16px;line-height:16px;color:#606060;letter-spacing:0.616px;">Ability to edit existing books in the system</div>
<div class="r" style="left:915px;top:427px;width:63px;height:20px;background:#7dfb7a;"></div>
<div class="r" style="left:978px;top:427px;width:62px;height:20px;background:#f29d56;"></div>
<div class="r" style="left:1060px;top:427px;width:125px;height:20px;background:#7dfb7a;"></div>
<div class="r" style="left:1202px;top:417px;width:126px;height:39px;background:#f37458;"></div>
<div class="t" style="left:1205px;top:430px;font-size:16px;line-height:16px;color:#333;letter-spacing:0.266px;">1 - Critical</div>
<div class="t" style="left:1331px;top:430px;font-size:16px;line-height:16px;color:#333;letter-spacing:-0.070px;">Developed</div>
<div class="t" style="left:1458px;top:430px;font-size:16px;line-height:16px;color:#333;letter-spacing:-0.233px;">Fred Bloggs</div>
<div class="t u" style="left:1583px;top:430px;font-size:16px;line-height:16px;color:#606060;letter-spacing:-0.369px;">1.0.0.0.0001</div>
<div class="t" style="left:1710px;top:430px;font-size:16px;line-height:16px;color:#333;letter-spacing:-0.531px;">Feature</div>
<div class="t" style="left:1835px;top:430px;font-size:15.5px;line-height:15.5px;color:#333;letter-spacing:-0.900px;">RQ:5</div>
<div class="r" style="left:240px;top:496px;width:1659px;height:1px;background:#ebebeb;"></div>
<div class="r" style="left:243px;top:468px;width:16px;height:16px;border:1.5px solid #333;box-sizing:border-box;background:#fff"></div>
<svg class="r" style="left:346px;top:467px;" width="12" height="20" viewBox="0 0 12 20"><polygon points="6,0.3 11.6,10 6,19.7 0.4,10" fill="#93b4db"/></svg>
<div class="t u" style="left:368.6px;top:469px;font-size:16px;line-height:16px;color:#606060;letter-spacing:0.548px;">Ability to delete existing books in the system</div>
<div class="r" style="left:915px;top:466px;width:63px;height:20px;background:#7dfb7a;"></div>
<div class="r" style="left:978px;top:466px;width:62px;height:20px;background:#dedede;"></div>
<div class="r" style="left:1060px;top:466px;width:125px;height:20px;background:#7dfb7a;"></div>
<div class="r" style="left:1202px;top:457px;width:126px;height:39px;background:#f37458;"></div>
<div class="t" style="left:1205px;top:469px;font-size:16px;line-height:16px;color:#333;letter-spacing:0.266px;">1 - Critical</div>
<div class="t" style="left:1331px;top:469px;font-size:16px;line-height:16px;color:#333;letter-spacing:-0.070px;">Developed</div>
<div class="t" style="left:1458px;top:469px;font-size:16px;line-height:16px;color:#333;letter-spacing:-0.233px;">Fred Bloggs</div>
<div class="t u" style="left:1583px;top:469px;font-size:16px;line-height:16px;color:#606060;letter-spacing:-0.097px;">1.0.0.0.0002</div>
<div class="t" style="left:1710px;top:469px;font-size:16px;line-height:16px;color:#333;letter-spacing:-0.531px;">Feature</div>
<div class="t" style="left:1835px;top:469px;font-size:15.5px;line-height:15.5px;color:#333;letter-spacing:-0.900px;">RQ:6</div>
<div class="r" style="left:240px;top:536px;width:1659px;height:1px;background:#ebebeb;"></div>
<div class="r" style="left:243px;top:508px;width:16px;height:16px;border:1.5px solid #333;box-sizing:border-box;background:#fff"></div>
<svg class="r" style="left:346px;top:507px;" width="12" height="20" viewBox="0 0 12 20"><polygon points="6,0.3 11.6,10 6,19.7 0.4,10" fill="#93b4db"/></svg>
<div class="t u" style="left:368.6px;top:509px;font-size:16px;line-height:16px;color:#606060;letter-spacing:0.490px;">Ability to associate books with different subjects</div>
<div class="r" style="left:915px;top:506px;width:63px;height:20px;background:#7dfb7a;"></div>
<div class="r" style="left:978px;top:506px;width:62px;height:20px;background:#f37458;"></div>
<div class="r" style="left:1060px;top:506px;width:125px;height:20px;background:#7dfb7a;"></div>
<div class="r" style="left:1202px;top:497px;width:126px;height:39px;background:#f37458;"></div>
<div class="t" style="left:1205px;top:508px;font-size:16px;line-height:16px;color:#333;letter-spacing:0.266px;">1 - Critical</div>
<div class="t" style="left:1331px;top:508px;font-size:16px;line-height:16px;color:#333;letter-spacing:-0.070px;">Developed</div>
<div class="t" style="left:1458px;top:508px;font-size:16px;line-height:16px;color:#333;letter-spacing:-0.233px;">Fred Bloggs</div>
<div class="t u" style="left:1583px;top:508px;font-size:16px;line-height:16px;color:#606060;letter-spacing:-0.915px;">1.1.0.0.0001</div>
<div class="t" style="left:1710px;top:508px;font-size:16px;line-height:16px;color:#333;letter-spacing:-0.531px;">Feature</div>
<div class="t" style="left:1835px;top:508px;font-size:15.5px;line-height:15.5px;color:#333;letter-spacing:-0.900px;">RQ:7</div>
<div class="r" style="left:240px;top:576px;width:1659px;height:1px;background:#ebebeb;"></div>
<div class="r" style="left:243px;top:548px;width:16px;height:16px;border:1.5px solid #333;box-sizing:border-box;background:#fff"></div>
<svg class="r" style="left:346px;top:547px;" width="12" height="20" viewBox="0 0 12 20"><polygon points="6,0.3 11.6,10 6,19.7 0.4,10" fill="#93b4db"/></svg>
<div class="t u" style="left:368.6px;top:549px;font-size:16px;line-height:16px;color:#606060;letter-spacing:0.528px;">Ability to associate books with different authors</div>
<div class="r" style="left:915px;top:546px;width:63px;height:20px;background:#7dfb7a;"></div>
<div class="r" style="left:978px;top:546px;width:62px;height:20px;background:#dedede;"></div>
<div class="r" style="left:1060px;top:546px;width:125px;height:20px;background:#7dfb7a;"></div>
<div class="r" style="left:1202px;top:537px;width:126px;height:39px;background:#f37458;"></div>
<div class="t" style="left:1205px;top:548px;font-size:16px;line-height:16px;color:#333;letter-spacing:0.266px;">1 - Critical</div>
<div class="t" style="left:1331px;top:548px;font-size:16px;line-height:16px;color:#333;letter-spacing:-0.070px;">Developed</div>
<div class="t" style="left:1458px;top:548px;font-size:16px;line-height:16px;color:#333;letter-spacing:-0.233px;">Fred Bloggs</div>
<div class="t u" style="left:1583px;top:548px;font-size:16px;line-height:16px;color:#606060;letter-spacing:-0.915px;">1.1.0.0.0001</div>
<div class="t" style="left:1710px;top:548px;font-size:16px;line-height:16px;color:#333;letter-spacing:-0.531px;">Feature</div>
<div class="t" style="left:1835px;top:548px;font-size:15.5px;line-height:15.5px;color:#333;letter-spacing:-0.900px;">RQ:8</div>
<div class="r" style="left:240px;top:616px;width:1659px;height:1px;background:#ebebeb;"></div>
<div class="r" style="left:243px;top:588px;width:16px;height:16px;border:1.5px solid #333;box-sizing:border-box;background:#fff"></div>
<svg class="r" style="left:346px;top:587px;" width="12" height="20" viewBox="0 0 12 20"><polygon points="6,0.3 11.6,10 6,19.7 0.4,10" fill="#93b4db"/></svg>
<div class="t u" style="left:368.6px;top:589px;font-size:16px;line-height:16px;color:#606060;letter-spacing:0.562px;">Ability to associate books with different editions</div>
<div class="r" style="left:915px;top:586px;width:42px;height:20px;background:#7dfb7a;"></div>
<div class="r" style="left:957px;top:586px;width:41px;height:20px;background:#f37458;"></div>
<div class="r" style="left:998px;top:586px;width:42px;height:20px;background:#dedede;"></div>
<div class="r" style="left:1060px;top:586px;width:125px;height:20px;background:#7dfb7a;"></div>
<div class="r" style="left:1202px;top:577px;width:126px;height:39px;background:#f37458;"></div>
<div class="t" style="left:1205px;top:589px;font-size:16px;line-height:16px;color:#333;letter-spacing:0.266px;">1 - Critical</div>
<div class="t" style="left:1331px;top:589px;font-size:16px;line-height:16px;color:#333;letter-spacing:-0.070px;">Developed</div>
<div class="t" style="left:1458px;top:589px;font-size:16px;line-height:16px;color:#333;letter-spacing:-0.233px;">Fred Bloggs</div>
<div class="t u" style="left:1583px;top:589px;font-size:16px;line-height:16px;color:#606060;letter-spacing:-0.642px;">1.1.0.0.0002</div>
<div class="t" style="left:1710px;top:589px;font-size:16px;line-height:16px;color:#333;letter-spacing:-0.531px;">Feature</div>
<div class="t" style="left:1835px;top:589px;font-size:15.5px;line-height:15.5px;color:#333;letter-spacing:-0.900px;">RQ:9</div>
<div class="r" style="left:240px;top:655px;width:1659px;height:1px;background:#ebebeb;"></div>
<div class="r" style="left:243px;top:628px;width:16px;height:16px;border:1.5px solid #333;box-sizing:border-box;background:#fff"></div>
<svg class="r" style="left:346px;top:627px;" width="12" height="20" viewBox="0 0 12 20"><polygon points="6,0.3 11.6,10 6,19.7 0.4,10" fill="#93b4db"/></svg>
<div class="t u" style="left:368.6px;top:629px;font-size:16px;line-height:16px;color:#606060;letter-spacing:0.526px;">Ability to completely erase all books stored in the system with one click</div>
<div class="r" style="left:915px;top:626px;width:42px;height:20px;background:#7dfb7a;"></div>
<div class="r" style="left:957px;top:626px;width:41px;height:20px;background:#f37458;"></div>
<div class="r" style="left:998px;top:626px;width:42px;height:20px;background:#dedede;"></div>
<div class="r" style="left:1060px;top:626px;width:125px;height:20px;background:#7dfb7a;"></div>
<div class="r" style="left:1202px;top:617px;width:126px;height:38px;background:#f37458;"></div>
<div class="t" style="left:1205px;top:629px;font-size:16px;line-height:16px;color:#333;letter-spacing:0.266px;">1 - Critical</div>
<div class="t" style="left:1331px;top:629px;font-size:16px;line-height:16px;color:#333;letter-spacing:-0.070px;">Developed</div>
<div class="t" style="left:1458px;top:629px;font-size:16px;line-height:16px;color:#333;letter-spacing:-0.233px;">Fred Bloggs</div>
<div class="t u" style="left:1583px;top:629px;font-size:16px;line-height:16px;color:#606060;letter-spacing:-0.997px;">1.2.0.0</div>
<div class="t" style="left:1710px;top:629px;font-size:16px;line-height:16px;color:#333;letter-spacing:-0.531px;">Feature</div>
<div class="t" style="left:1835px;top:629px;font-size:15.5px;line-height:15.5px;color:#333;letter-spacing:-0.900px;">RQ:10</div>
<div class="r" style="left:240px;top:695px;width:1659px;height:1px;background:#ebebeb;"></div>
<div class="r" style="left:243px;top:668px;width:16px;height:16px;border:1.5px solid #333;box-sizing:border-box;background:#fff"></div>
<svg class="r" style="left:312px;top:668px;" width="8" height="8" viewBox="0 0 8 8"><polygon points="7.3,0.3 7.3,7.3 0.3,7.3" fill="#707070"/></svg>
<svg class="r" style="left:331px;top:668px;" width="18" height="20" viewBox="0 0 18 20"><polygon points="0.3,11.5 3,0.3 8.6,5.8 8.6,19.8" fill="#93b4db"/><polygon points="8.6,5.8 14.3,0.3 17.3,11.5 8.6,19.8" fill="#7487e3"/><polygon points="5.6,8.6 8.6,5.8 11.6,8.6 8.6,19.8" fill="#4747c2"/></svg>
<div class="t u up" style="left:356.0px;top:667px;font-size:16px;line-height:16px;color:#606060;letter-spacing:0.331px;">Edition Management</div>
<div class="t" style="left:915px;top:668px;font-size:16px;line-height:16px;color:#6a6a6a;letter-spacing:0.011px;">Not Covered</div>
<div class="r" style="left:1060px;top:666px;width:68px;height:20px;background:#f37458;"></div>
<div class="r" style="left:1128px;top:666px;width:20px;height:20px;background:#f5f055;"></div>
<div class="r" style="left:1148px;top:666px;width:37px;height:20px;background:#dedede;"></div>
<div class="r" style="left:1202px;top:656px;width:126px;height:39px;background:#f37458;"></div>
<div class="t" style="left:1205px;top:668px;font-size:16px;line-height:16px;color:#333;letter-spacing:0.266px;">1 - Critical</div>
<div class="t" style="left:1331px;top:668px;font-size:16px;line-height:16px;color:#333;letter-spacing:-0.186px;">In Progress</div>
<div class="t" style="left:1458px;top:668px;font-size:16px;line-height:16px;color:#333;letter-spacing:-0.233px;">Fred Bloggs</div>
<div class="t" style="left:1710px;top:668px;font-size:16px;line-height:16px;color:#333;letter-spacing:-0.716px;">Package</div>
<div class="t" style="left:1835px;top:668px;font-size:15.5px;line-height:15.5px;color:#333;letter-spacing:-0.900px;">RQ:11</div>
<div class="r" style="left:240px;top:735px;width:1659px;height:1px;background:#ebebeb;"></div>
<div class="r" style="left:243px;top:708px;width:16px;height:16px;border:1.5px solid #333;box-sizing:border-box;background:#fff"></div>
<svg class="r" style="left:346px;top:707px;" width="12" height="20" viewBox="0 0 12 20"><polygon points="6,0.3 11.6,10 6,19.7 0.4,10" fill="#93b4db"/></svg>
<div class="t u" style="left:368.6px;top:709px;font-size:16px;line-height:16px;color:#606060;letter-spacing:0.612px;">Ability to create different editions</div>
<div class="t" style="left:915px;top:709px;font-size:16px;line-height:16px;color:#6a6a6a;letter-spacing:0.011px;">Not Covered</div>
<div class="r" style="left:1060px;top:706px;width:68px;height:20px;background:#f37458;"></div>
<div class="r" style="left:1128px;top:706px;width:20px;height:20px;background:#f5f055;"></div>
<div class="r" style="left:1148px;top:706px;width:37px;height:20px;background:#dedede;"></div>
<div class="r" style="left:1202px;top:696px;width:126px;height:39px;background:#f37458;"></div>
<div class="t" style="left:1205px;top:709px;font-size:16px;line-height:16px;color:#333;letter-spacing:0.266px;">1 - Critical</div>
<div class="t" style="left:1331px;top:709px;font-size:16px;line-height:16px;color:#333;letter-spacing:-0.186px;">In Progress</div>
<div class="t" style="left:1458px;top:709px;font-size:16px;line-height:16px;color:#333;letter-spacing:-0.233px;">Fred Bloggs</div>
<div class="t u" style="left:1583px;top:709px;font-size:16px;line-height:16px;color:#606060;letter-spacing:-0.097px;">1.0.0.0.0003</div>
<div class="t" style="left:1710px;top:709px;font-size:16px;line-height:16px;color:#333;letter-spacing:-0.531px;">Feature</div>
<div class="t" style="left:1835px;top:709px;font-size:15.5px;line-height:15.5px;color:#333;letter-spacing:-0.900px;">RQ:12</div>
<div class="r" style="left:240px;top:775px;width:1659px;height:1px;background:#ebebeb;"></div>
<div class="r" style="left:243px;top:748px;width:16px;height:16px;border:1.5px solid #333;box-sizing:border-box;background:#fff"></div>
<svg class="r" style="left:312px;top:748px;" width="8" height="8" viewBox="0 0 8 8"><polygon points="7.3,0.3 7.3,7.3 0.3,7.3" fill="#707070"/></svg>
<svg class="r" style="left:331px;top:748px;" width="18" height="20" viewBox="0 0 18 20"><polygon points="0.3,11.5 3,0.3 8.6,5.8 8.6,19.8" fill="#93b4db"/><polygon points="8.6,5.8 14.3,0.3 17.3,11.5 8.6,19.8" fill="#7487e3"/><polygon points="5.6,8.6 8.6,5.8 11.6,8.6 8.6,19.8" fill="#4747c2"/></svg>
<div class="t u up" style="left:356.0px;top:747px;font-size:16px;line-height:16px;color:#606060;letter-spacing:0.308px;">Author Management</div>
<div class="r" style="left:915px;top:746px;width:84px;height:20px;background:#7dfb7a;"></div>
<div class="r" style="left:999px;top:746px;width:41px;height:20px;background:#f5f055;"></div>
<div class="r" style="left:1060px;top:746px;width:47px;height:20px;background:#7dfb7a;"></div>
<div class="r" style="left:1107px;top:746px;width:7px;height:20px;background:#f37458;"></div>
<div class="r" style="left:1114px;top:746px;width:58px;height:20px;background:#f5f055;"></div>
<div class="r" style="left:1172px;top:746px;width:13px;height:20px;background:#dedede;"></div>
<div class="r" style="left:1202px;top:736px;width:126px;height:39px;background:#f29d56;"></div>
<div class="t" style="left:1205px;top:748px;font-size:16px;line-height:16px;color:#333;letter-spacing:-0.154px;">2 - High</div>
<div class="t" style="left:1331px;top:748px;font-size:16px;line-height:16px;color:#333;letter-spacing:-0.186px;">In Progress</div>
<div class="t" style="left:1458px;top:748px;font-size:16px;line-height:16px;color:#333;letter-spacing:0.297px;">Joe P Smith</div>
<div class="t" style="left:1710px;top:748px;font-size:16px;line-height:16px;color:#333;letter-spacing:-0.716px;">Package</div>
<div class="t" style="left:1835px;top:748px;font-size:15.5px;line-height:15.5px;color:#333;letter-spacing:-0.900px;">RQ:13</div>
<div class="r" style="left:240px;top:815px;width:1659px;height:1px;background:#ebebeb;"></div>
<div class="r" style="left:243px;top:787px;width:16px;height:16px;border:1.5px solid #333;box-sizing:border-box;background:#fff"></div>
<svg class="r" style="left:324px;top:787px;" width="8" height="8" viewBox="0 0 8 8"><polygon points="7.3,0.3 7.3,7.3 0.3,7.3" fill="#707070"/></svg>
<svg class="r" style="left:344px;top:788px;" width="18" height="20" viewBox="0 0 18 20"><polygon points="0.3,11.5 3,0.3 8.6,5.8 8.6,19.8" fill="#93b4db"/><polygon points="8.6,5.8 14.3,0.3 17.3,11.5 8.6,19.8" fill="#7487e3"/><polygon points="5.6,8.6 8.6,5.8 11.6,8.6 8.6,19.8" fill="#4747c2"/></svg>
<div class="t u up" style="left:368.6px;top:787px;font-size:16px;line-height:16px;color:#606060;letter-spacing:0.691px;">Ability to add new authors to the system</div>
<div class="r" style="left:915px;top:785px;width:63px;height:20px;background:#7dfb7a;"></div>
<div class="r" style="left:978px;top:785px;width:62px;height:20px;background:#f5f055;"></div>
<div class="r" style="left:1060px;top:785px;width:125px;height:20px;background:#f5f055;"></div>
<div class="r" style="left:1202px;top:776px;width:126px;height:39px;background:#f29d56;"></div>
<div class="t" style="left:1205px;top:787px;font-size:16px;line-height:16px;color:#333;letter-spacing:-0.154px;">2 - High</div>
<div class="t" style="left:1331px;top:787px;font-size:16px;line-height:16px;color:#333;letter-spacing:-0.294px;">Planned</div>
<div class="t" style="left:1458px;top:787px;font-size:16px;line-height:16px;color:#333;letter-spacing:0.297px;">Joe P Smith</div>
<div class="t u" style="left:1583px;top:787px;font-size:16px;line-height:16px;color:#606060;letter-spacing:-0.497px;">1.0.0.0</div>
<div class="t" style="left:1710px;top:787px;font-size:16px;line-height:16px;color:#333;letter-spacing:-0.716px;">Package</div>
<div class="t" style="left:1835px;top:787px;font-size:15.5px;line-height:15.5px;color:#333;letter-spacing:-0.900px;">RQ:14</div>
<div class="r" style="left:1899px;top:0px;width:1px;height:812px;background:#ffffff;"></div>
<div class="r" style="left:1900px;top:0px;width:2px;height:812px;background:#f1f1f1;"></div>
<div class="r" style="left:1900px;top:19px;width:2px;height:653px;background:#c8c8c8;"></div>
</body></html>
